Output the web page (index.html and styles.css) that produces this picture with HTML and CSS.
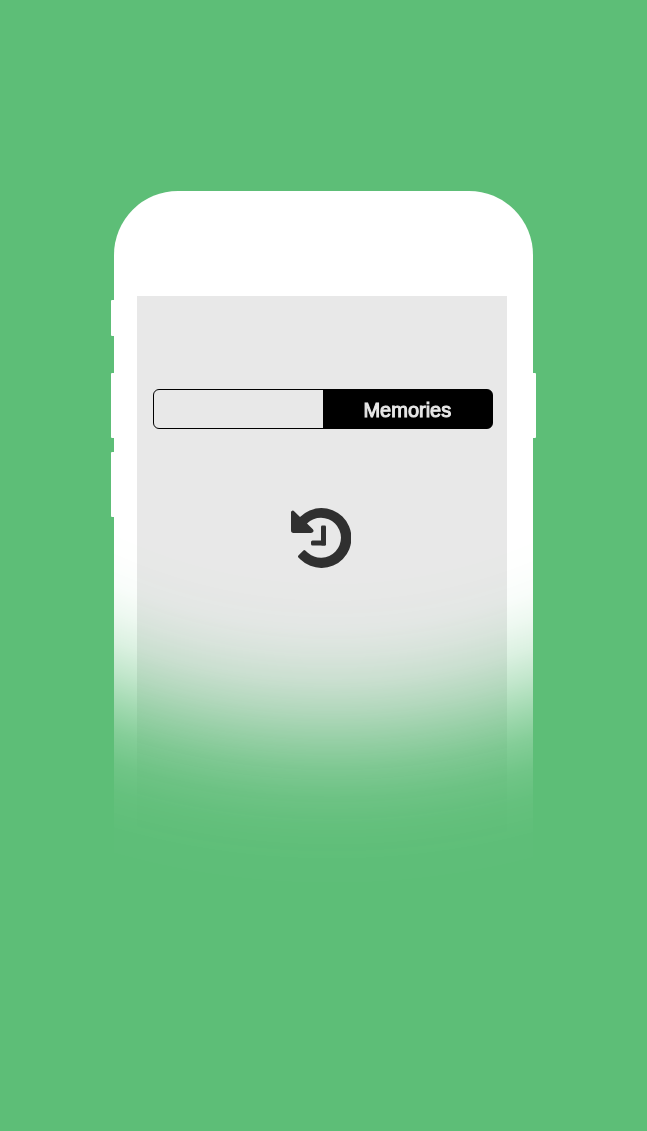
FILE: index.html
```html
<!DOCTYPE html>
<html lang="en">
<head>
<meta charset="utf-8">
<meta name="viewport" content="width=device-width, initial-scale=1">
<title>Memories</title>
<link rel="stylesheet" href="styles.css">
</head>
<body>
<main class="stage">
  <div class="phone">
    <span class="key key-mute"></span>
    <span class="key key-up"></span>
    <span class="key key-down"></span>
    <span class="key key-power"></span>
    <div class="case">
      <section class="screen">
        <div class="tabs">
          <button class="tab" type="button"></button>
          <button class="tab tab-active" type="button">Memories</button>
        </div>
        <svg class="history" viewBox="0 0 60 60" aria-hidden="true">
          <g fill="#303030">
            <path d="M9 9 A30 30 0 1 1 9.500 51.500 L7.400 49.400 Q6.500 48.500 7.400 47.500 L12.400 42.500 Q13.300 41.600 14.300 42.600 L16.500 44.600 A20 20 0 1 0 16 15.500 L21.600 21 Q23 22.500 22.400 23.600 T20 24.900 H2.500 Q0 24.900 0 22.300 V4.500 Q0 3 1.200 2.700 Q2.200 2.300 3.400 3.400Z"/>
            <rect x="30" y="17.500" width="5" height="20" rx="1.200"/>
            <rect x="20" y="32.500" width="15" height="5" rx="1.500"/>
          </g>
        </svg>
      </section>
    </div>
  </div>
</main>
</body>
</html>
```
FILE: styles.css
```css
* { box-sizing: border-box; }
body {
  margin: 0;
  min-height: 100vh;
  background: #5dbe77;
  font-family: "Liberation Sans", Arial, sans-serif;
}
.stage {
  display: flex;
  justify-content: center;
  padding: 191px 16px 0;
}
.phone {
  position: relative;
  width: 69%;
  padding: 0 3px;
  -webkit-mask-image: radial-gradient(circle at 52% -116px, #000 505px, rgba(0,0,0,.99) 530px, rgba(0,0,0,.96) 555px, rgba(0,0,0,.89) 580px, rgba(0,0,0,.78) 607px, rgba(0,0,0,.62) 635px, rgba(0,0,0,.42) 665px, rgba(0,0,0,.25) 692px, rgba(0,0,0,.12) 722px, rgba(0,0,0,.05) 750px, rgba(0,0,0,.01) 785px, transparent 830px);
  mask-image: radial-gradient(circle at 52% -116px, #000 505px, rgba(0,0,0,.99) 530px, rgba(0,0,0,.96) 555px, rgba(0,0,0,.89) 580px, rgba(0,0,0,.78) 607px, rgba(0,0,0,.62) 635px, rgba(0,0,0,.42) 665px, rgba(0,0,0,.25) 692px, rgba(0,0,0,.12) 722px, rgba(0,0,0,.05) 750px, rgba(0,0,0,.01) 785px, transparent 830px);
}
.case {
  padding: 105px 26px 0 23px;
  border-radius: 64px 64px 0 0;
  background: #fff;
}
.screen {
  display: flex;
  flex-direction: column;
  align-items: center;
  min-height: 640px;
  padding: 93px 14px 0 16px;
  background: #e8e8e8;
}
.tabs {
  display: flex;
  width: 100%;
  height: 40px;
  border: 1px solid #000;
  border-radius: 6px;
  overflow: hidden;
  background: linear-gradient(90deg, #e8e8e8 50%, #000 50%);
}
.tab {
  flex: 1;
  padding: 2px 0 0;
  border: 0;
  background: transparent;
  color: #000;
  font: 20px/24px "Liberation Sans", Arial, sans-serif;
}
.tab-active {
  background: #000;
  color: #e8e8e8;
  -webkit-text-stroke: 1px #e8e8e8;
}
.history {
  width: 60px;
  height: 60px;
  margin: 79px 4px 0 0;
}
.key {
  position: absolute;
  left: 0;
  width: 4px;
  height: 65px;
  border-radius: 1px;
  background: #fff;
}
.key-mute { top: 109px; height: 36px; }
.key-up { top: 182px; }
.key-down { top: 261px; }
.key-power { top: 182px; left: auto; right: 0; }
```
